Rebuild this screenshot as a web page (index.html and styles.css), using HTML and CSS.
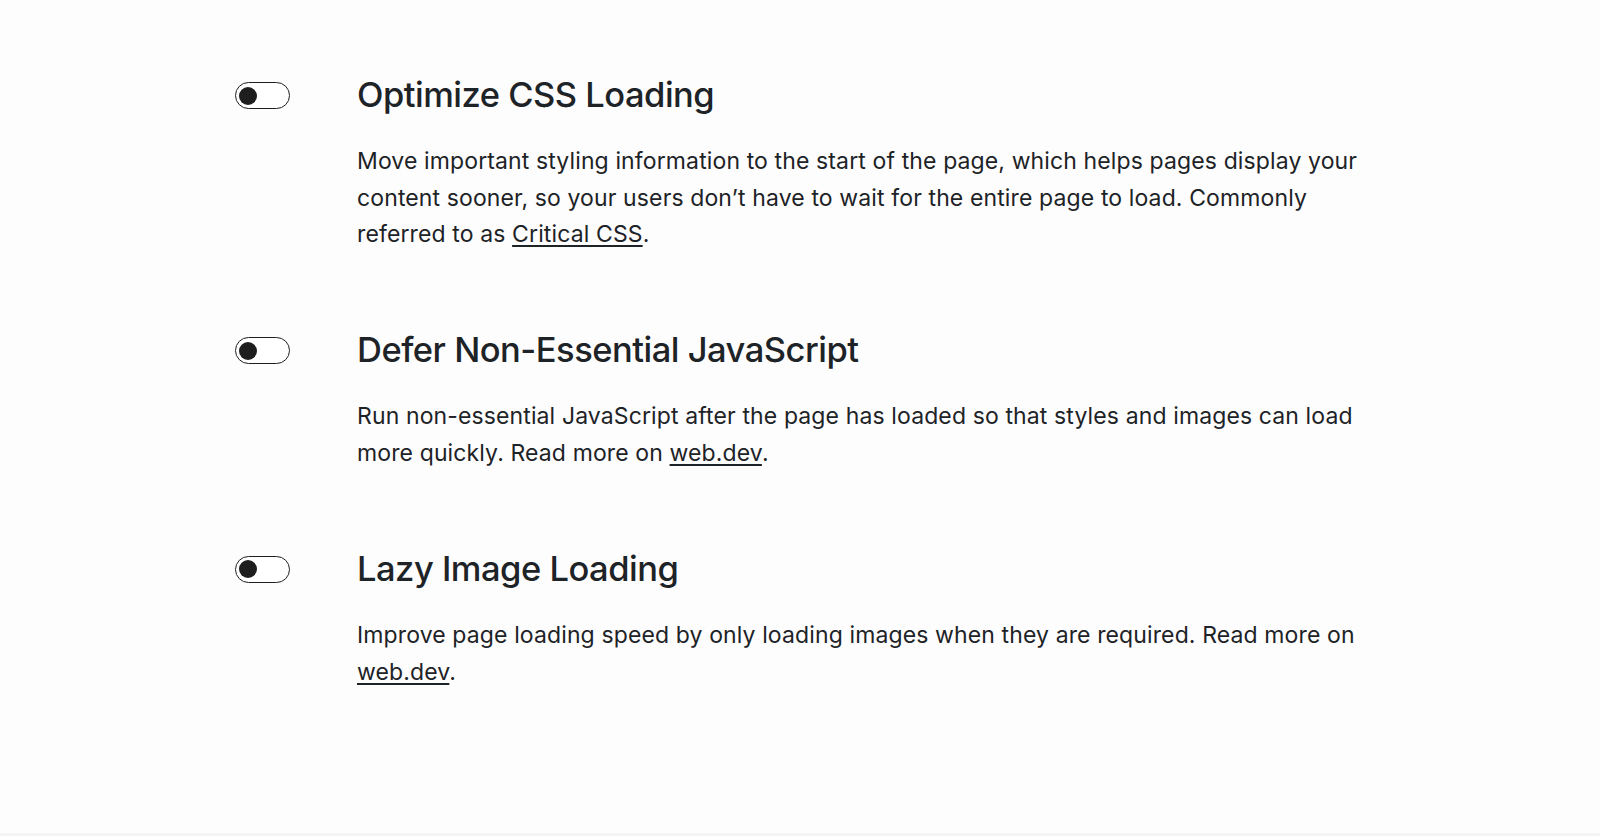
FILE: index.html
```html
<!DOCTYPE html>
<html lang="en">
<head>
  <meta charset="UTF-8">
  <meta name="viewport" content="width=device-width, initial-scale=1.0">
  <title>Performance settings</title>
  <link rel="stylesheet" href="styles.css">
</head>
<body>
  <main class="settings">
    <section class="setting">
      <span class="toggle"><i class="knob"></i></span>
      <div class="setting-body">
        <h2>Optimize CSS Loading</h2>
        <p>Move important styling information to the start of the page, which helps pages display your content sooner, so your users don’t have to wait for the entire page to load. Commonly referred to as <a href="#">Critical CSS</a>.</p>
      </div>
    </section>

    <section class="setting">
      <span class="toggle"><i class="knob"></i></span>
      <div class="setting-body">
        <h2>Defer Non-Essential JavaScript</h2>
        <p>Run non-essential JavaScript after the page has loaded so that styles and images can load more quickly. Read more on <a href="#">web.dev</a>.</p>
      </div>
    </section>

    <section class="setting">
      <span class="toggle"><i class="knob"></i></span>
      <div class="setting-body">
        <h2>Lazy Image Loading</h2>
        <p>Improve page loading speed by only loading images when they are required. Read more on <a href="#">web.dev</a>.</p>
      </div>
    </section>
  </main>
  <footer class="page-foot"></footer>
</body>
</html>
```

FILE: styles.css
```css
* { padding: 0; margin: 0; box-sizing: border-box; }

html, body { height: 100%; }

body {
  background: #fdfdfd;
  color: #1d2327;
  font-family: Inter, "Noto Sans", sans-serif;
  display: flex;
  flex-direction: column;
}

.settings {
  flex: 1;
  width: 1130px;
  margin: 0 auto;
  padding-top: 73px;
}

.setting {
  display: flex;
  align-items: flex-start;
  gap: 67px;
  margin-bottom: 75.5px;
}

.toggle {
  flex: none;
  width: 55px;
  height: 27px;
  margin-top: 9px;
  border: 1.5px solid #1e1e1e;
  border-radius: 14px;
  display: flex;
  align-items: center;
  padding-left: 3px;
  background: #fff;
}

.knob {
  display: block;
  width: 18px;
  height: 18px;
  border-radius: 50%;
  background: #1e1e1e;
}

.setting-body {
  flex: 1;
}

.setting-body h2 {
  font-size: 34.5px;
  font-weight: 500;
  line-height: 44px;
  letter-spacing: -0.5px;
  margin-bottom: 26px;
}

.setting-body p {
  font-size: 23px;
  line-height: 36.6px;
  letter-spacing: 0.12px;
}

.setting-body a {
  color: inherit;
  text-decoration: underline;
  text-underline-offset: 3px;
}

.page-foot {
  height: 3px;
  background: #f3f4f4;
}
```
